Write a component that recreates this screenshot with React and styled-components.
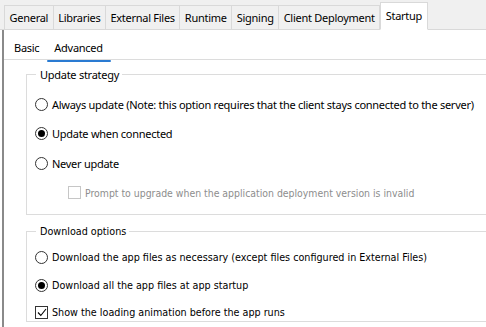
import React from 'react';
import styled, {createGlobalStyle} from 'styled-components';

const GlobalStyle = createGlobalStyle`
  html, body {
    margin: 0;
    padding: 0;
    background: #ffffff;
    overflow: hidden;
  }
  body {
    font-family: "Noto Sans", "Open Sans", sans-serif;
    font-size: 11px;
    letter-spacing: -0.27px;
    color: #000;
  }
`

const tahomaFont = '"DejaVu Sans Condensed", "DejaVu Sans", Verdana, sans-serif'

const Window = styled.div`
  width: 486px;
  height: 327px;
  background: #fff;
  display: flex;
  flex-direction: column;
  overflow: hidden;
`
const TabStrip = styled.div`
  display: flex;
  align-items: flex-end;
  height: 30px;
  padding-left: 4px;
  background: #f0f0f0;
  border-bottom: 1px solid #d9d9d9;
  box-sizing: border-box;
`
const Tab = styled.div`
  height: ${p => (p.active ? '28px' : '24px')};
  margin-bottom: ${p => (p.active ? '-1px' : '0')};
  padding: 0 4.5px;
  display: flex;
  align-items: ${p => (p.active ? 'flex-start' : 'center')};
  padding-top: ${p => (p.active ? '5px' : '0')};
  box-sizing: border-box;
  background: ${p => (p.active ? '#ffffff' : '#f0f0f0')};
  border: 1px solid #d9d9d9;
  border-left: ${p => (p.first || p.active ? '1px solid #d9d9d9' : 'none')};
  border-bottom: ${p => (p.active ? '1px solid #fff' : 'none')};
  white-space: nowrap;
`
const Body = styled.div`
  flex: 1;
  display: flex;
  flex-direction: column;
  margin-left: 2px;
  border-left: 2px solid #8a8a8a;
`
const SubTabs = styled.div`
  display: flex;
  gap: 11px;
  padding: 10px 0 0 8px;
  height: 30px;
  box-sizing: border-box;
  border-bottom: 1px solid #dcdcdc;
`
const SubTab = styled.div`
  position: relative;
  padding: 0 2px;
  &::after {
    content: '';
    display: ${p => (p.active ? 'block' : 'none')};
    position: absolute;
    left: -5px;
    right: -6px;
    bottom: -3px;
    height: 2px;
    border-radius: 2px;
    background: #2a7bd2;
  }
`
const Groups = styled.div`
  padding: 7px 0 0 22px;
  display: flex;
  flex-direction: column;
  gap: 10px;
`
const Group = styled.fieldset`
  margin: 0;
  padding: ${p => p.top || 6}px 0 ${p => p.bottom || 0}px 8px;
  border: 1px solid #dcdcdc;
  border-right: none;
  min-width: 0;
  display: flex;
  flex-direction: column;
  gap: ${p => p.gap || 16}px;
  legend {
    padding: 0 3px 0 4px;
    margin-left: 1px;
    font-family: ${p => p.legendFont || 'inherit'};
    font-size: ${p => p.legendSize || 11}px;
    letter-spacing: ${p => (p.legendFont ? '0' : '-0.27px')};
  }
`
const Option = styled.label`
  display: flex;
  align-items: center;
  gap: 4px;
  white-space: nowrap;
  height: 16px;
  padding-left: ${p => p.indent || 0}px;
  color: ${p => (p.disabled ? '#8d8d8d' : '#000')};
  font-family: ${p => (p.tahoma ? tahomaFont : 'inherit')};
  font-size: ${p => p.size || 11}px;
  letter-spacing: ${p => (p.tahoma ? '0' : '-0.27px')};
`
const RadioMark = styled.span`
  width: 11px;
  height: 11px;
  border: 1px solid #333;
  border-radius: 50%;
  display: flex;
  align-items: center;
  justify-content: center;
  flex-shrink: 0;
  &::after {
    content: '';
    display: ${p => (p.checked ? 'block' : 'none')};
    width: 7px;
    height: 7px;
    border-radius: 50%;
    background: #000;
  }
`
const CheckMark = styled.span`
  width: 11px;
  height: 11px;
  border: 1px solid ${p => (p.disabled ? '#c6c6c6' : '#333')};
  display: flex;
  align-items: center;
  justify-content: center;
  flex-shrink: 0;
  background: #fff;
`

const Radio = ({checked, children, tahoma, size}) => (
  <Option tahoma={tahoma} size={size}>
    <RadioMark checked={checked} />
    {children}
  </Option>
)

const Check = ({checked, disabled, indent, children, tahoma, size}) => (
  <Option tahoma={tahoma} disabled={disabled} indent={indent} size={size}>
    <CheckMark disabled={disabled}>
      {checked && (
        <svg width="10" height="9" viewBox="0 0 10 9">
          <path d="M1 4.5 L3.8 7.5 L9 1" fill="none" stroke="#000" strokeWidth="1.1" />
        </svg>
      )}
    </CheckMark>
    {children}
  </Option>
)

const tabs = [
  {label: 'General'},
  {label: 'Libraries'},
  {label: 'External Files'},
  {label: 'Runtime'},
  {label: 'Signing'},
  {label: 'Client Deployment'},
  {label: 'Startup', active: true},
]

export default function App() {
  return (
    <Window>
      <GlobalStyle />
      <TabStrip>
        {tabs.map((t, i) => (
          <Tab key={t.label} first={i === 0} active={t.active}>{t.label}</Tab>
        ))}
      </TabStrip>
      <Body>
        <SubTabs>
          <SubTab>Basic</SubTab>
          <SubTab active>Advanced</SubTab>
        </SubTabs>
        <Groups>
          <Group top={14} gap={13.5} bottom={13}>
            <legend>Update strategy</legend>
            <Radio>Always update (Note: this option requires that the client stays connected to the server)</Radio>
            <Radio checked>Update when connected</Radio>
            <Radio>Never update</Radio>
            <Check disabled indent={33} tahoma size={10.4}>Prompt to upgrade when the application deployment version is invalid</Check>
          </Group>
          <Group top={12} gap={11.5} legendFont={tahomaFont} legendSize={10.7}>
            <legend>Download options</legend>
            <Radio tahoma size={10.7}>Download the app files as necessary (except files configured in External Files)</Radio>
            <Radio tahoma size={10.7} checked>Download all the app files at app startup</Radio>
            <Check tahoma size={10.7} checked>Show the loading animation before the app runs</Check>
          </Group>
        </Groups>
      </Body>
    </Window>
  );
}
